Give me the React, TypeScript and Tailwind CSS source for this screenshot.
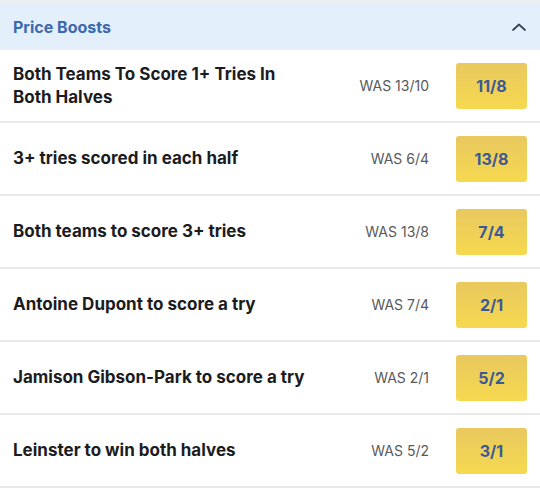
const boosts = [
  { title: 'Both Teams To Score 1+ Tries In Both Halves', was: '13/10', odds: '11/8' },
  { title: '3+ tries scored in each half', was: '6/4', odds: '13/8' },
  { title: 'Both teams to score 3+ tries', was: '13/8', odds: '7/4' },
  { title: 'Antoine Dupont to score a try', was: '7/4', odds: '2/1' },
  { title: 'Jamison Gibson-Park to score a try', was: '2/1', odds: '5/2' },
  { title: 'Leinster to win both halves', was: '5/2', odds: '3/1' },
];

export default function App() {
  return (
    <div className="w-[540px] h-[488px] bg-white overflow-hidden" style={{ fontFamily: 'Inter, "Liberation Sans", sans-serif' }}>
      <div className="h-[3px] bg-[#eceff2]" />

      {/* Header */}
      <div className="h-[47px] bg-[#e3effb] flex items-center justify-between pl-[13px] pr-[13px]">
        <span className="text-[16px] font-bold text-[#3b69ad]">Price Boosts</span>
        <svg width="16" height="10" viewBox="0 0 16 10" fill="none">
          <path d="M2 8L8 2.5L14 8" stroke="#33445c" strokeWidth="1.8" strokeLinecap="round" strokeLinejoin="round" />
        </svg>
      </div>

      {/* Rows */}
      {boosts.map((b) => (
        <div key={b.title} className="h-[73px] border-b-2 border-[#e9e9ea] flex items-center pl-[13px] pr-[13px]">
          <div className="flex-1 min-w-0 pr-5 text-[17px] leading-[23px] font-bold text-[#1c1c1e]">{b.title}</div>
          <div className="w-[100px] text-right text-[14px] text-[#58595b] mr-[27px]">WAS {b.was}</div>
          <div className="w-[71px] h-[46px] rounded-[3px] bg-gradient-to-b from-[#e9c85e] to-[#f6d94f] flex items-center justify-center text-[16px] font-bold text-[#3a5997]">
            {b.odds}
          </div>
        </div>
      ))}
    </div>
  );
}
